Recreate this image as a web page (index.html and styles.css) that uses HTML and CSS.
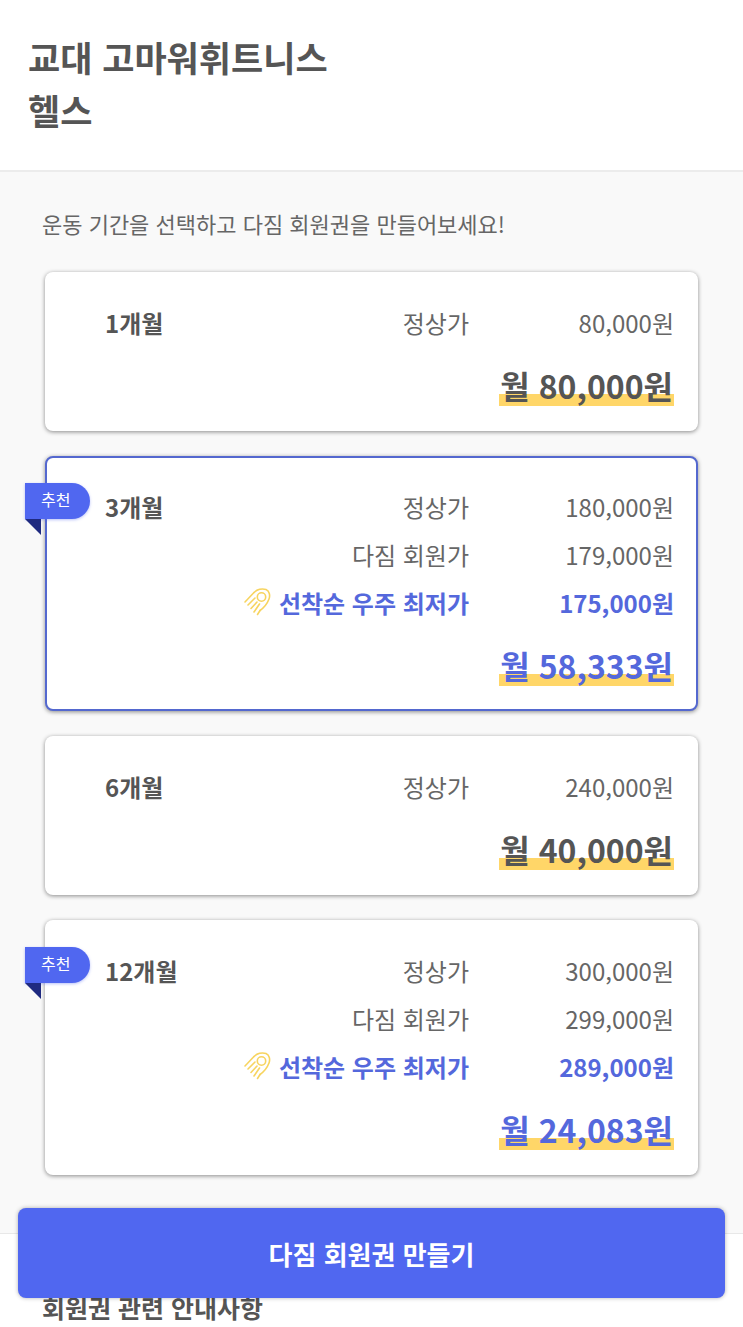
FILE: index.html
```html
<!DOCTYPE html>
<html lang="ko">
<head>
    <meta charset="UTF-8">
    <meta name="viewport" content="width=device-width, initial-scale=1.0">
    <title>교대 고마워휘트니스 헬스</title>
    <link rel="stylesheet" href="styles.css">
</head>
<body>
    <svg width="0" height="0" class="defs">
        <symbol id="comet" viewBox="0 0 28 30">
            <g fill="none" stroke="#f7d45f" stroke-width="1.6" stroke-linecap="round">
                <circle cx="18.5" cy="10" r="4.2"/>
                <path d="M11 5.5C14 2.5 19 1 23 2.6C26.5 4 27.3 8.500 26 12C24.500 16 20.500 21 17 23.500"/>
                <path d="M11 5.500L2 15"/>
                <path d="M12 11L5 18"/>
                <path d="M14 15L8 21.500"/>
                <path d="M16.500 17L11 25"/>
                <path d="M17 23.500L14.500 27.500"/>
            </g>
        </symbol>
    </svg>

    <div class="page">
        <header class="header">
            <h1>교대 고마워휘트니스<br>헬스</h1>
        </header>

        <section class="plans">
            <p class="lead">운동 기간을 선택하고 다짐 회원권을 만들어보세요!</p>

            <div class="card">
                <div class="rows">
                    <div class="row">
                        <span class="month">1개월</span>
                        <span class="label">정상가</span>
                        <span class="price">80,000원</span>
                    </div>
                </div>
                <div class="total"><span>월 80,000원</span></div>
            </div>

            <div class="card selected">
                <div class="ribbon">추천</div>
                <div class="rows">
                    <div class="row">
                        <span class="month">3개월</span>
                        <span class="label">정상가</span>
                        <span class="price">180,000원</span>
                    </div>
                    <div class="row">
                        <span class="label">다짐 회원가</span>
                        <span class="price">179,000원</span>
                    </div>
                    <div class="row best">
                        <span class="label"><svg class="comet"><use href="#comet"/></svg>선착순 우주 최저가</span>
                        <span class="price">175,000원</span>
                    </div>
                </div>
                <div class="total"><span>월 58,333원</span></div>
            </div>

            <div class="card">
                <div class="rows">
                    <div class="row">
                        <span class="month">6개월</span>
                        <span class="label">정상가</span>
                        <span class="price">240,000원</span>
                    </div>
                </div>
                <div class="total"><span>월 40,000원</span></div>
            </div>

            <div class="card">
                <div class="ribbon">추천</div>
                <div class="rows">
                    <div class="row">
                        <span class="month">12개월</span>
                        <span class="label">정상가</span>
                        <span class="price">300,000원</span>
                    </div>
                    <div class="row">
                        <span class="label">다짐 회원가</span>
                        <span class="price">299,000원</span>
                    </div>
                    <div class="row best">
                        <span class="label"><svg class="comet"><use href="#comet"/></svg>선착순 우주 최저가</span>
                        <span class="price">289,000원</span>
                    </div>
                </div>
                <div class="total accent"><span>월 24,083원</span></div>
            </div>
        </section>

        <section class="notice">
            <h2>회원권 관련 안내사항</h2>
        </section>

        <button class="cta">다짐 회원권 만들기</button>
    </div>
</body>
</html>
```

FILE: styles.css
```css
* {
    box-sizing: border-box;
}
html, body {
    margin: 0;
    height: 100%;
}
body {
    font-family: "Noto Sans CJK KR", "Noto Sans", sans-serif;
    color: #555;
    background: #fff;
    overflow: hidden;
}
.defs {
    position: absolute;
}
.page {
    position: relative;
    height: 1327px;
    overflow: hidden;
}

.header {
    height: 172px;
    padding: 30px 28px 0;
    border-bottom: 2px solid #ececec;
}
.header h1 {
    margin: 0;
    font-size: 35px;
    line-height: 53px;
    font-weight: 700;
    color: #555;
}

.plans {
    height: 1062px;
    padding: 33px 45px 0;
    background: #f9f9f9;
    border-bottom: 1px solid #e8e8e8;
}
.lead {
    margin: 0 0 31px -3px;
    font-size: 22px;
    line-height: 36px;
    color: #666;
}

.card {
    position: relative;
    margin-bottom: 25px;
    padding: 26px 24px 26px 60px;
    background: #fff;
    border-radius: 8px;
    box-shadow: 0 1px 4px rgba(0, 0, 0, 0.45);
}
.card.selected {
    padding: 24px 22px 24px 58px;
    border: 2px solid #5468cf;
    margin-bottom: 25px;
}

.row {
    display: flex;
    align-items: center;
    height: 48px;
    font-size: 24px;
    color: #666;
}
.month {
    font-weight: 700;
    color: #555;
}
.label {
    display: flex;
    align-items: center;
    margin-left: auto;
}
.month + .label {
    margin-left: auto;
}
.price {
    width: 205px;
    text-align: right;
}
.best {
    color: #5468dc;
    font-weight: 700;
}
.comet {
    width: 28px;
    height: 30px;
    margin-right: 8px;
}

.total {
    display: flex;
    justify-content: flex-end;
    height: 40px;
    margin-top: 19px;
    font-size: 32px;
    line-height: 40px;
    font-weight: 700;
    color: #555;
}
.total span {
    display: block;
    height: 42px;
    padding: 0 1px;
    background: linear-gradient(transparent 29px, #ffd668 29px, #ffd668 41px, transparent 41px);
}
.selected .total,
.total.accent {
    color: #5468dc;
}

.ribbon {
    position: absolute;
    left: -20px;
    top: 27px;
    width: 65px;
    height: 36px;
    padding-left: 16px;
    font-size: 16px;
    line-height: 32px;
    color: #fff;
    background: #5067f0;
    border-radius: 0 18px 18px 0;
    box-shadow: 0 1px 3px rgba(80, 103, 240, 0.4);
}
.selected .ribbon {
    left: -22px;
    top: 25px;
}
.ribbon::after {
    content: "";
    position: absolute;
    left: 0;
    top: 36px;
    border-top: 16px solid #1f2a80;
    border-left: 16px solid transparent;
}

.notice {
    padding: 55px 42px 0;
}
.notice h2 {
    margin: 0;
    font-size: 25px;
    line-height: 36px;
    font-weight: 700;
    color: #555;
}

.cta {
    position: absolute;
    left: 18px;
    top: 1208px;
    width: 707px;
    height: 90px;
    border: none;
    border-radius: 8px;
    background: #5067f0;
    color: #fff;
    font-family: inherit;
    font-size: 26px;
    font-weight: 700;
    box-shadow: 0 0 4px rgba(0, 0, 0, 0.3);
}
```
